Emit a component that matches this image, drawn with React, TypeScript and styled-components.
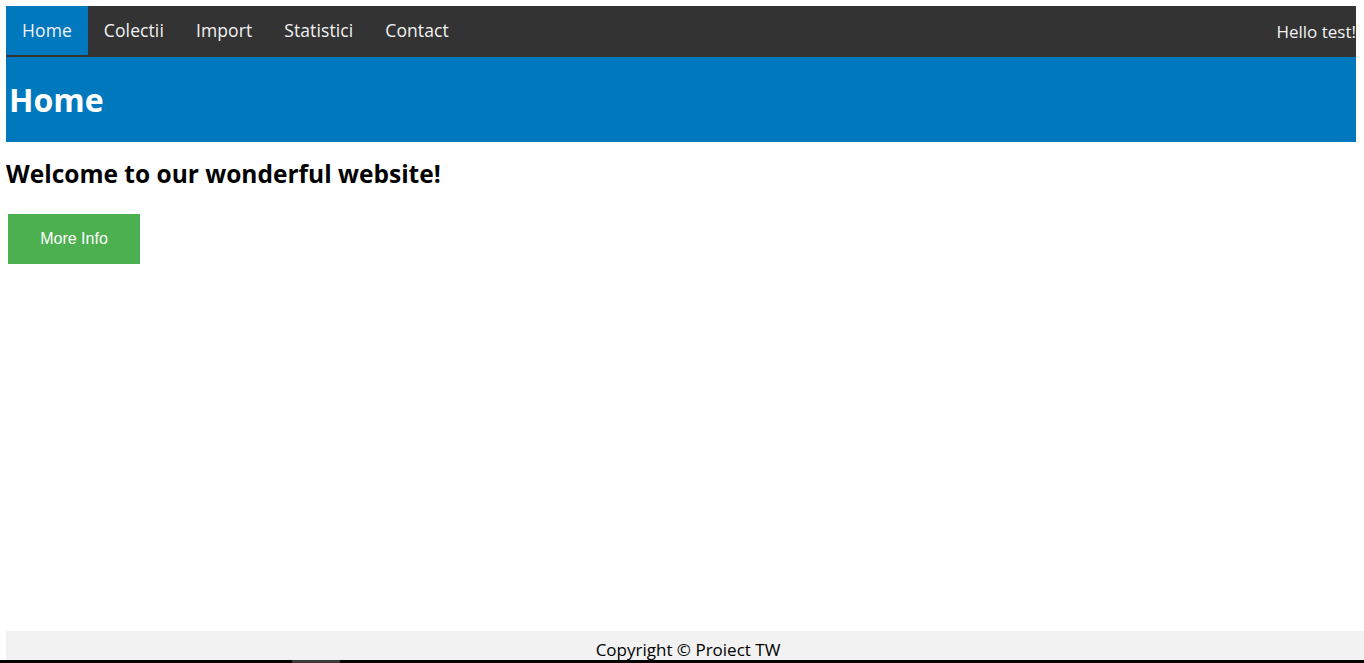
import React from "react";
import styled, { createGlobalStyle } from "styled-components";

const GlobalStyle = createGlobalStyle`
  html, body {
    margin: 0;
    padding: 0;
    background: #fff;
  }
  body {
    font-family: "Open Sans", "Noto Sans", sans-serif;
    overflow: hidden;
  }
`;

const Page = styled.div`
  padding: 6px 8px 0 6px;
  min-height: 657px;
  box-sizing: border-box;
`;

const NavBar = styled.nav`
  display: flex;
  align-items: flex-start;
  height: 51px;
  background-color: #333333;
`;

const NavLink = styled.a<{ $active?: boolean }>`
  display: block;
  height: 49px;
  line-height: 49px;
  padding: 0 16px;
  font-size: 17.5px;
  letter-spacing: 0.1px;
  color: #f2f2f2;
  text-decoration: none;
  background-color: ${(p) => (p.$active ? "#0078be" : "transparent")};
`;

const Greeting = styled.span`
  margin-left: auto;
  line-height: 51px;
  font-size: 17px;
  color: #f2f2f2;
  white-space: nowrap;
`;

const Header = styled.header`
  background-color: #0078be;
  color: #fff;
  padding: 0 3px;
  height: 85px;
  display: flex;
  align-items: center;

  h1 {
    margin: 0;
    font-size: 32px;
    line-height: 40px;
    font-weight: 700;
  }
`;

const Main = styled.main`
  padding: 0;

  h2 {
    margin: 18px 0 26px;
    font-size: 24.5px;
    line-height: 28px;
    font-weight: 700;
    color: #000;
  }
`;

const InfoButton = styled.button`
  display: block;
  width: 132px;
  height: 50px;
  margin-left: 2px;
  border: none;
  background-color: #4caf50;
  color: #fff;
  font-family: "Liberation Sans", Arial, sans-serif;
  font-size: 16px;
  cursor: pointer;
`;

const Footer = styled.footer`
  position: fixed;
  left: 6px;
  bottom: 3px;
  width: 100%;
  height: 29px;
  background-color: #f2f2f2;
  text-align: center;
  font-size: 17px;
  line-height: 20px;
  padding-top: 9px;
  box-sizing: border-box;
  color: #000;
  overflow: hidden;
`;

const Taskbar = styled.div`
  position: fixed;
  left: 0;
  right: 0;
  bottom: 0;
  height: 3px;
  background: linear-gradient(
    to right,
    #000 0,
    #000 292px,
    #3a3a3a 292px,
    #3a3a3a 340px,
    #000 340px
  );
`;

const links = ["Home", "Colectii", "Import", "Statistici", "Contact"];

const App: React.FC = () => {
  return (
    <>
      <GlobalStyle />
      <Page>
        <NavBar>
          {links.map((link) => (
            <NavLink key={link} href="#" $active={link === "Home"}>
              {link}
            </NavLink>
          ))}
          <Greeting>Hello test!</Greeting>
        </NavBar>
        <Header>
          <h1>Home</h1>
        </Header>
        <Main>
          <h2>Welcome to our wonderful website!</h2>
          <InfoButton>More Info</InfoButton>
        </Main>
      </Page>
      <Footer>Copyright © Proiect TW</Footer>
      <Taskbar />
    </>
  );
};

export default App;
